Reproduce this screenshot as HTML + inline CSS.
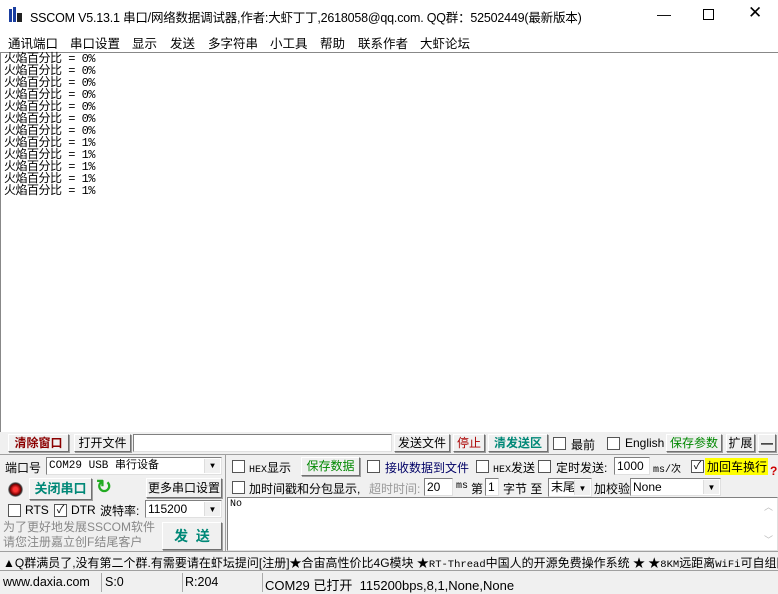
<!DOCTYPE html><html><head><meta charset="utf-8"><style>
*{box-sizing:border-box;margin:0;padding:0}
body{width:778px;height:593px;overflow:hidden;background:#f0f0f0;font-family:"Liberation Sans","Noto Sans CJK SC",sans-serif;font-size:12px;color:#000;position:relative}
.a{position:absolute;white-space:nowrap}
.btn{position:absolute;border:1px solid;border-color:#fff #707070 #707070 #fff;box-shadow:1px 1px 0 #a0a0a0;background:#f0f0f0;text-align:center;white-space:nowrap}
.in{position:absolute;background:#fff;border:1px solid;border-color:#808080 #e0e0e0 #e0e0e0 #808080;white-space:nowrap;overflow:hidden;padding-left:2px}
.cb{position:absolute;width:13px;height:13px;border:1px solid #555;background:#fff;font-size:11px;line-height:11px;text-align:center}
.dd{position:absolute;right:1px;top:1px;bottom:1px;width:16px;background:#f0f0f0;border-left:1px solid #ddd;font-size:8px;text-align:center}
.mono{font-family:"Liberation Mono","Noto Sans CJK SC",monospace}
.m{position:absolute;top:33px;font-size:12.5px}
</style></head><body>
<div class="a" style="left:0;top:0;width:778px;height:31px;background:#fff"></div>
<div class="a" style="left:8px;top:7px;width:16px;height:16px">
<div class="a" style="left:1px;top:2px;width:3px;height:13px;background:#1a3ea0"></div>
<div class="a" style="left:5px;top:0;width:3px;height:15px;background:#1a3ea0"></div>
<div class="a" style="left:9px;top:6px;width:5px;height:9px;background:#222"></div></div>
<div class="a" style="left:30px;top:7px;font-size:12.5px;letter-spacing:-0.2px">SSCOM V5.13.1 串口/网络数据调试器,作者:大虾丁丁,2618058@qq.com. QQ群：52502449(最新版本)</div>
<div class="a" style="left:657px;top:6px;font-size:14px">—</div>
<div class="a" style="left:703px;top:9px;width:11px;height:11px;border:1px solid #000"></div>
<div class="a" style="left:748px;top:3px;font-size:17px">✕</div>
<div class="a" style="left:0;top:31px;width:778px;height:21px;background:#fff"></div>
<div class="m" style="left:8px">通讯端口</div><div class="m" style="left:70px">串口设置</div><div class="m" style="left:132px">显示</div><div class="m" style="left:170px">发送</div><div class="m" style="left:208px">多字符串</div><div class="m" style="left:270px">小工具</div><div class="m" style="left:320px">帮助</div><div class="m" style="left:358px">联系作者</div><div class="m" style="left:420px">大虾论坛</div>
<div class="a" style="left:0;top:52px;width:778px;height:380px;background:#fff;border-top:1px solid #888;border-left:1px solid #888"></div>
<div class="a mono" style="left:4px;top:53px;font-size:12px;line-height:12px;letter-spacing:-0.5px">火焰百分比 = 0%<br>火焰百分比 = 0%<br>火焰百分比 = 0%<br>火焰百分比 = 0%<br>火焰百分比 = 0%<br>火焰百分比 = 0%<br>火焰百分比 = 0%<br>火焰百分比 = 1%<br>火焰百分比 = 1%<br>火焰百分比 = 1%<br>火焰百分比 = 1%<br>火焰百分比 = 1%</div>
<div class="btn" style="left:8px;top:434px;width:61px;height:18px;color:#8b0000;font-weight:bold;line-height:16px">清除窗口</div>
<div class="btn" style="left:74px;top:434px;width:57px;height:18px;line-height:16px">打开文件</div>
<div class="in" style="left:133px;top:434px;width:259px;height:18px"></div>
<div class="btn" style="left:394px;top:434px;width:56px;height:18px;line-height:16px">发送文件</div>
<div class="btn" style="left:453px;top:434px;width:32px;height:18px;line-height:16px;color:#a00">停止</div>
<div class="btn" style="left:488px;top:434px;width:60px;height:18px;line-height:16px;color:#087;font-weight:bold">清发送区</div>
<div class="cb" style="left:553px;top:437px"></div><div class="a" style="left:571px;top:436px">最前</div>
<div class="cb" style="left:607px;top:437px"></div><div class="a" style="left:625px;top:436px">English</div>
<div class="btn" style="left:666px;top:434px;width:56px;height:18px;line-height:16px;color:#080">保存参数</div>
<div class="btn" style="left:726px;top:434px;width:29px;height:18px;line-height:16px">扩展</div>
<div class="btn" style="left:758px;top:434px;width:18px;height:18px;line-height:16px;font-weight:bold">—</div>
<div class="a" style="left:0;top:454px;width:778px;height:1px;background:#a0a0a0"></div>
<div class="a" style="left:5px;top:459px">端口号</div>
<div class="in mono" style="left:46px;top:457px;width:176px;height:18px;font-size:11px;line-height:16px">COM29 USB 串行设备<div class="dd">▼</div></div>
<div class="a" style="left:225px;top:455px;width:1px;height:96px;background:#a0a0a0"></div>
<div class="a" style="left:8px;top:482px;width:15px;height:15px;border-radius:50%;background:radial-gradient(#f33 20%,#700 50%,#333 60%,#bbb 70%)"></div>
<div class="btn" style="left:29px;top:478px;width:63px;height:22px;line-height:20px;color:#087;font-weight:bold;font-size:13px">关闭串口</div>
<div class="a" style="left:96px;top:476px;font-size:19px;color:#2a2;font-weight:bold">↻</div>
<div class="btn" style="left:146px;top:478px;width:76px;height:20px;line-height:18px">更多串口设置</div>
<div class="cb" style="left:8px;top:504px"></div><div class="a" style="left:25px;top:503px">RTS</div>
<div class="cb" style="left:54px;top:504px">✓</div><div class="a" style="left:71px;top:503px">DTR</div>
<div class="a" style="left:100px;top:502px">波特率:</div>
<div class="in" style="left:145px;top:500px;width:77px;height:18px;line-height:16px">115200<div class="dd">▼</div></div>
<div class="a" style="left:3px;top:520px;color:#888;line-height:15px">为了更好地发展SSCOM软件<br>请您注册嘉立创F结尾客户</div>
<div class="btn" style="left:162px;top:522px;width:60px;height:28px;line-height:26px;color:#087;font-weight:bold;font-size:14px">发&nbsp;&nbsp;送</div>
<div class="cb" style="left:232px;top:460px"></div><div class="a" style="left:249px;top:459px"><span class="mono" style="font-size:10px">HEX</span>显示</div>
<div class="btn" style="left:301px;top:457px;width:59px;height:19px;line-height:17px;color:#080">保存数据</div>
<div class="cb" style="left:367px;top:460px"></div><div class="a" style="left:385px;top:459px;color:#006">接收数据到文件</div>
<div class="cb" style="left:476px;top:460px"></div><div class="a" style="left:493px;top:459px"><span class="mono" style="font-size:10px">HEX</span>发送</div>
<div class="cb" style="left:538px;top:460px"></div><div class="a" style="left:556px;top:459px">定时发送:</div>
<div class="in" style="left:614px;top:457px;width:36px;height:18px;line-height:16px">1000</div>
<div class="a mono" style="left:653px;top:460px;font-size:10px">ms/次</div>
<div class="cb" style="left:691px;top:460px">✓</div>
<div class="a" style="left:705px;top:458px;background:#ff0;width:63px;height:17px;padding-left:2px">加回车换行</div>
<div class="a" style="left:770px;top:464px;color:#c00;font-weight:bold">?</div>
<div class="cb" style="left:232px;top:481px"></div><div class="a" style="left:249px;top:480px">加时间戳和分包显示,</div>
<div class="a" style="left:369px;top:480px;color:#999">超时时间:</div>
<div class="in" style="left:424px;top:478px;width:29px;height:18px;line-height:16px">20</div>
<div class="a mono" style="left:456px;top:481px;font-size:10px">ms</div>
<div class="a" style="left:471px;top:480px">第</div>
<div class="in" style="left:485px;top:478px;width:14px;height:18px;line-height:16px">1</div>
<div class="a" style="left:503px;top:480px">字节 至</div>
<div class="in" style="left:548px;top:478px;width:44px;height:19px;line-height:17px">末尾<div class="dd">▼</div></div>
<div class="a" style="left:594px;top:480px">加校验</div>
<div class="in" style="left:630px;top:478px;width:91px;height:18px;line-height:16px">None<div class="dd">▼</div></div>
<div class="in mono" style="left:227px;top:497px;width:551px;height:54px;font-size:10px;padding:1px 2px">No</div>
<div class="a" style="left:764px;top:500px;width:12px;height:48px;color:#bbb;font-size:9px">︿<br><br><br>﹀</div>
<div class="a" style="left:0;top:551px;width:778px;height:20px;border-top:1px solid #a0a0a0;border-bottom:1px solid #a0a0a0"></div>
<div class="a" style="left:3px;top:554px;font-size:12px">▲Q群满员了,没有第二个群.有需要请在虾坛提问[注册]★合宙高性价比4G模块 ★<span class="mono" style="font-size:10.5px">RT-Thread</span>中国人的开源免费操作系统 ★ ★<span class="mono" style="font-size:10.5px">8KM</span>远距离<span class="mono" style="font-size:10.5px">WiFi</span>可自组网</div>
<div class="a" style="left:0;top:572px;width:778px;height:21px;background:#f0f0f0"></div>
<div class="a" style="left:3px;top:575px;font-size:12.5px">www.daxia.com</div>
<div class="a" style="left:101px;top:573px;width:1px;height:19px;background:#aaa"></div>
<div class="a" style="left:105px;top:575px;font-size:12.5px">S:0</div>
<div class="a" style="left:182px;top:573px;width:1px;height:19px;background:#aaa"></div>
<div class="a" style="left:185px;top:575px;font-size:12.5px">R:204</div>
<div class="a" style="left:262px;top:573px;width:1px;height:19px;background:#aaa"></div>
<div class="a" style="left:265px;top:575px;font-size:13px">COM29 已打开&nbsp;&nbsp;115200bps,8,1,None,None</div>
</body></html>
